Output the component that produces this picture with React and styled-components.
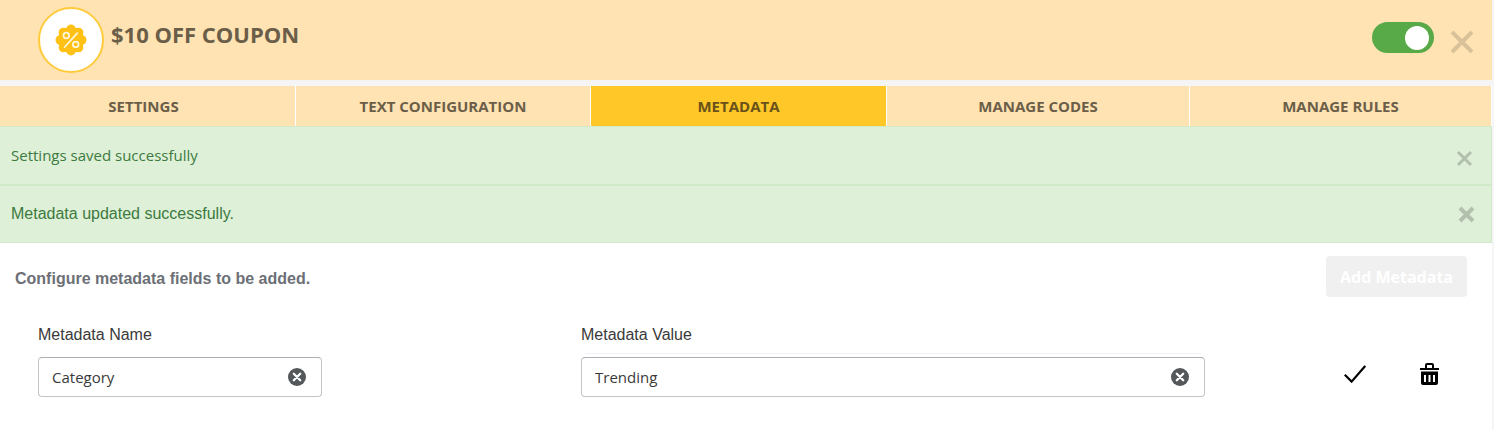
import React, { useState } from 'react';
import styled, { createGlobalStyle } from 'styled-components';

const GlobalStyle = createGlobalStyle`
  * {
    box-sizing: border-box;
  }
  body {
    margin: 0;
    background: #fff;
    font-family: 'Open Sans', 'Noto Sans', sans-serif;
    font-size: 16px;
    color: #333;
  }
  button,
  input {
    font-family: inherit;
  }
`;

const Page = styled.main`
  min-height: 100vh;
  border-right: 2px solid #f5f5f5;
`;

const Header = styled.header`
  display: flex;
  align-items: flex-start;
  height: 80px;
  padding: 7px 18px 0 38px;
  background: #ffe3b3;
`;

const Badge = styled.div`
  display: flex;
  align-items: center;
  justify-content: center;
  width: 66px;
  height: 66px;
  border: 2px solid #ffcb3d;
  border-radius: 50%;
  background: #fff;
`;

const Title = styled.h1`
  flex: 1;
  margin: 11px 0 0 7px;
  font-size: 22px;
  line-height: 32px;
  font-weight: 700;
  color: #6b5e49;
`;

const Toggle = styled.input`
  appearance: none;
  display: flex;
  align-items: center;
  width: 62px;
  height: 31px;
  margin: 15px 16px 0 0;
  padding: 0 5px;
  border-radius: 16px;
  background: ${(props) => (props.checked ? '#58aa48' : '#ccc')};
  cursor: pointer;
  &::before {
    content: '';
    width: 24px;
    height: 24px;
    margin-left: ${(props) => (props.checked ? 'auto' : '0')};
    border-radius: 50%;
    background: #fff;
  }
`;

const IconButton = styled.button`
  display: flex;
  padding: 0;
  border: 0;
  background: none;
  color: ${(props) => props.$color || '#000'};
  cursor: pointer;
`;

const HeaderClose = styled(IconButton)`
  margin-top: 23px;
`;

const Tabs = styled.nav`
  display: grid;
  grid-template-columns: 296fr 295fr 296fr 303fr 302fr;
  border-top: 6px solid #f5f5f5;
`;

const Tab = styled.button`
  height: 40px;
  padding: 0 8px;
  border: 0;
  border-right: 1px solid #fff;
  background: ${(props) => (props.$active ? '#ffc828' : '#ffe3b3')};
  font-size: 15px;
  line-height: 20px;
  font-weight: 700;
  color: ${(props) => (props.$active ? '#69521a' : '#6b5e49')};
  cursor: pointer;
  &:first-child {
    padding-right: 16px;
  }
`;

const Alert = styled.div`
  display: flex;
  align-items: center;
  justify-content: space-between;
  padding: 18px 16px 18px 11px;
  border: 1px solid #d0e9c6;
  border-left: 0;
  background: #dff0d8;
  font-family: ${(props) => (props.$plain ? "'Liberation Sans', Arial, sans-serif" : 'inherit')};
  font-size: ${(props) => (props.$plain ? '16px' : '15px')};
  line-height: 20px;
  color: #3c7a3e;
  &:first-of-type {
    padding: 16px 18px 17px 11px;
    svg {
      margin-top: 7px;
    }
  }
`;

const Toolbar = styled.div`
  display: flex;
  align-items: center;
  justify-content: space-between;
  padding: 13px 25px 0 15px;
`;

const Hint = styled.p`
  margin: 4px 0 0;
  font: 700 16px/20px 'Liberation Sans', Arial, sans-serif;
  color: #6c6f76;
`;

const AddButton = styled.button`
  height: 41px;
  padding: 0 14px;
  border: 0;
  border-radius: 4px;
  background: #f0f0f0;
  font-size: 16px;
  font-weight: 700;
  color: #fff;
`;

const FieldRow = styled.form`
  display: grid;
  grid-template-columns: 284fr 259fr 624fr 234fr;
  align-items: end;
  padding: 28px 53px 33px 38px;
`;

const Field = styled.div`
  grid-column: ${(props) => props.$column};
`;

const Label = styled.label`
  display: block;
  font: 16px/20px 'Liberation Sans', Arial, sans-serif;
  color: #3a3a3a;
`;

const Rule = styled.div`
  height: 1px;
  margin: 8px 4px 3px;
  background: ${(props) => (props.$visible ? '#eef0fc' : 'transparent')};
`;

const InputBox = styled.div`
  display: flex;
  align-items: center;
  height: 40px;
  padding: 0 15px 0 13px;
  border: 1px solid #c4c4c8;
  border-top-color: #acacb4;
  border-radius: 4px;
  background: #fff;
`;

const TextInput = styled.input`
  flex: 1;
  min-width: 0;
  padding: 0;
  border: 0;
  outline: 0;
  background: none;
  font-size: 15px;
  line-height: 20px;
  color: #3a3a3a;
`;

const RowActions = styled.div`
  grid-column: 4;
  display: flex;
  justify-content: flex-end;
  align-items: center;
  gap: 54px;
  height: 40px;
  padding-bottom: 6px;
`;

function PercentIcon() {
  const petals = [0, 45, 90, 135, 180, 225, 270, 315];
  return (
    <svg width="32" height="32" viewBox="0 0 32 32" aria-hidden="true">
      <g fill="#ffc116">
        <circle cx="16" cy="16" r="13" />
        {petals.map((angle) => (
          <circle key={angle} cx="16" cy="5.3" r="4.8" transform={`rotate(${angle} 16 16)`} />
        ))}
      </g>
      <g fill="none" stroke="#fff6dc" strokeWidth="1.8" strokeLinecap="round">
        <path d="M22.3 9.2 9.7 23" />
        <circle cx="11.3" cy="11.5" r="2.8" />
        <circle cx="20.7" cy="20.4" r="2.8" />
      </g>
    </svg>
  );
}

function CrossIcon({ size, weight }) {
  return (
    <svg width={size} height={size} viewBox={`0 0 ${size} ${size}`} aria-hidden="true">
      <path
        d={`M2 2 ${size - 2} ${size - 2}M${size - 2} 2 2 ${size - 2}`}
        stroke="currentColor"
        strokeWidth={weight}
      />
    </svg>
  );
}

function ClearIcon() {
  return (
    <svg width="18" height="18" viewBox="0 0 18 18" aria-hidden="true">
      <circle cx="9" cy="9" r="9" fill="#54585b" />
      <path d="m5.8 5.8 6.4 6.4m0-6.4-6.4 6.4" stroke="#fff" strokeWidth="2.3" strokeLinecap="round" />
    </svg>
  );
}

function CheckIcon() {
  return (
    <svg width="22" height="18" viewBox="0 0 22 18" aria-hidden="true">
      <path d="m.8 9.8 6.8 6.8L21.2.9" fill="none" stroke="currentColor" strokeWidth="2.2" />
    </svg>
  );
}

function TrashIcon() {
  return (
    <svg width="19" height="22" viewBox="0 0 19 22" aria-hidden="true">
      <path d="M6 5V2q0-1 1-1h5q1 0 1 1v3M0 6h19" fill="none" stroke="currentColor" strokeWidth="2" />
      <path
        fillRule="evenodd"
        fill="currentColor"
        d="M1 8.500h17V20q0 2-2 2H3q-2 0-2-2zM4 12v7h2v-7zm4.500 0v7h2v-7zm4.500 0v7h2v-7z"
      />
    </svg>
  );
}

const tabs = ['SETTINGS', 'TEXT CONFIGURATION', 'METADATA', 'MANAGE CODES', 'MANAGE RULES'];

function MetadataField({ id, label, column, ruled, value, onChange }) {
  return (
    <Field $column={column}>
      <Label htmlFor={id}>{label}</Label>
      <Rule $visible={ruled} />
      <InputBox>
        <TextInput id={id} type="text" value={value} onChange={(e) => onChange(e.target.value)} />
        <IconButton type="button" aria-label={`Clear ${label}`} onClick={() => onChange('')}>
          <ClearIcon />
        </IconButton>
      </InputBox>
    </Field>
  );
}

export default function App() {
  const [enabled, setEnabled] = useState(true);
  const [activeTab, setActiveTab] = useState('METADATA');
  const [name, setName] = useState('Category');
  const [value, setValue] = useState('Trending');

  return (
    <>
      <GlobalStyle />
      <Page>
        <Header>
          <Badge>
            <PercentIcon />
          </Badge>
          <Title>$10 OFF COUPON</Title>
          <Toggle
            type="checkbox"
            role="switch"
            aria-label="Coupon enabled"
            checked={enabled}
            onChange={(e) => setEnabled(e.target.checked)}
          />
          <HeaderClose type="button" aria-label="Close" $color="#d9c29a">
            <CrossIcon size={24} weight={4} />
          </HeaderClose>
        </Header>
        <Tabs>
          {tabs.map((tab) => (
            <Tab key={tab} type="button" $active={tab === activeTab} onClick={() => setActiveTab(tab)}>
              {tab}
            </Tab>
          ))}
        </Tabs>
        <Alert role="status">
          Settings saved successfully
          <IconButton type="button" aria-label="Dismiss" $color="#b2c0ad">
            <CrossIcon size={17} weight={3} />
          </IconButton>
        </Alert>
        <Alert role="status" $plain>
          Metadata updated successfully.
          <IconButton type="button" aria-label="Dismiss" $color="#b2c0ad">
            <CrossIcon size={17} weight={4} />
          </IconButton>
        </Alert>
        <Toolbar>
          <Hint>Configure metadata fields to be added.</Hint>
          <AddButton type="button">Add Metadata</AddButton>
        </Toolbar>
        <FieldRow onSubmit={(e) => e.preventDefault()}>
          <MetadataField id="meta-name" label="Metadata Name" column={1} value={name} onChange={setName} />
          <MetadataField id="meta-value" label="Metadata Value" column={3} ruled value={value} onChange={setValue} />
          <RowActions>
            <IconButton type="submit" aria-label="Save">
              <CheckIcon />
            </IconButton>
            <IconButton type="button" aria-label="Delete">
              <TrashIcon />
            </IconButton>
          </RowActions>
        </FieldRow>
      </Page>
    </>
  );
}
